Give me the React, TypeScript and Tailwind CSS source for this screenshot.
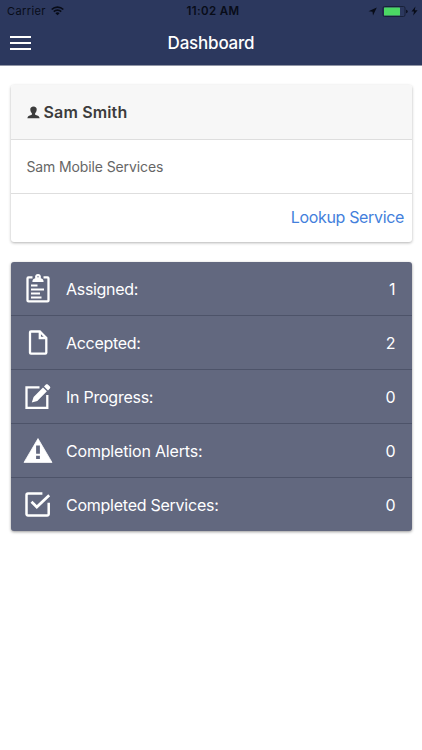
import React from "react";

type StatusRowType = {
  icon: React.ReactNode;
  label: string;
  labelStyle: string;
  count: number;
};

type IconProps = {
  children: React.ReactNode;
};

const RowIcon: React.FC<IconProps> = ({ children }) => (
  <svg
    viewBox="0 0 32 32"
    className="h-8 w-8 shrink-0"
    fill="none"
    stroke="white"
    strokeWidth="2.3"
  >
    {children}
  </svg>
);

const ClipboardIcon = () => (
  <RowIcon>
    <path d="M10.5 4.4H6.5a1 1 0 0 0-1 1v22a1 1 0 0 0 1 1h19a1 1 0 0 0 1-1v-22a1 1 0 0 0-1-1H21.5" />
    <path
      d="M10.4 9c0-2.3.8-3.2 2.8-3.8C12.6 2.6 14 1 16 1s3.4 1.6 2.8 4.2c2 .6 2.8 1.5 2.8 3.8z"
      fill="white"
      stroke="none"
    />
    <circle cx="16" cy="3.8" r="0.7" fill="#62687f" stroke="none" />
    <path d="M9 12.5h6.5M9 16.5h13M9 20.5h9M9 24.5h10.5" strokeWidth="2" />
  </RowIcon>
);

const DocumentIcon = () => (
  <RowIcon>
    <path d="M17.8 4.5H9a1 1 0 0 0-1 1v20.2a1 1 0 0 0 1 1h14.3a1 1 0 0 0 1-1V11z" />
    <path d="M17.8 4.5V11h6.5" />
  </RowIcon>
);

const EditIcon = () => (
  <RowIcon>
    <path d="M17.5 6.4h-13v20.5h20.8V14" />
    <path
      d="M9.8 21.5l1.8-5.6L21 6.4l3.9 3.9-9.6 9.6zM22 5.4l1.9-1.9c.5-.5 1.3-.5 1.9 0l2.1 2.1c.5.5.5 1.3 0 1.9L26 9.4z"
      fill="white"
      stroke="none"
    />
  </RowIcon>
);

const AlertIcon = () => (
  <RowIcon>
    <path
      d="M16 3.6L30 27.4H2z"
      fill="white"
      strokeWidth="0.8"
      strokeLinejoin="round"
    />
    <path d="M14.1 10.4h3.8v8.4h-3.8zM14.1 20.8h3.8v3.2h-3.8z" fill="#62687f" stroke="none" />
  </RowIcon>
);

const CheckIcon = () => (
  <RowIcon>
    <path
      d="M20.4 4.5H6a1.5 1.5 0 0 0-1.5 1.5v19A1.5 1.5 0 0 0 6 26.5h19.2a1.5 1.5 0 0 0 1.5-1.5V13.8"
      strokeWidth="2.5"
    />
    <path d="M9.5 12.7l5.3 5.3L27.2 6.2" strokeWidth="2.7" />
  </RowIcon>
);

const StatusRow: React.FC<StatusRowType> = ({ icon, label, labelStyle, count }) => {
  return (
    <li className="flex h-[54px] items-center border-b border-[#4d5369] pr-4 pl-[11.5px] text-white last:h-[53px] last:border-b-0">
      {icon}
      <span className={`ml-3 text-base leading-5 ${labelStyle}`}>{label}</span>
      <span className="ml-auto text-base leading-5">{count}</span>
    </li>
  );
};

const StatusBar = () => (
  <div className="grid h-[22px] grid-cols-3 items-center px-[7px] text-[11px] leading-4 text-[#080c18]">
    <div className="flex items-center gap-[5px]">
      <span className="tracking-[0.4px]">Carrier</span>
      <svg viewBox="0 0 13 10" className="h-[10px] w-[13px]" fill="none" stroke="currentColor">
        <path d="M.7 3.5a8.2 8.2 0 0 1 11.6 0M2.8 5.7a5.2 5.2 0 0 1 7.4 0" strokeWidth="1.7" />
        <path d="M6.5 9.3L4.4 7.2a3 3 0 0 1 4.2 0z" fill="currentColor" stroke="none" />
      </svg>
    </div>
    <span className="pl-1 text-center text-[11.5px] font-semibold tracking-[0.4px] whitespace-nowrap">
      11:02 AM
    </span>
    <div className="-mr-[3px] flex items-center justify-end">
      <svg viewBox="0 0 9 9" className="mr-[5px] h-[9px] w-[9px]" fill="currentColor">
        <path d="M8.8.4L5 8.6 4.5 4.8.5 4.3z" />
      </svg>
      <svg viewBox="0 0 27 11" className="h-[11px] w-[27px]">
        <rect x="1" y=".5" width="22" height="10" rx="1.5" fill="none" stroke="#182139" />
        <rect x="2" y="1.5" width="16" height="8" rx=".5" fill="#4bd964" />
        <path d="M24.2 3.8c2 .4 2 3 0 3.4z" fill="#080c18" />
      </svg>
      <svg viewBox="0 0 7 10" className="ml-[2px] h-[10px] w-[7px]" fill="currentColor">
        <path d="M4.4.5L.5 5.5H3L2.2 9.5 6.6 4.2H3.8z" />
      </svg>
    </div>
  </div>
);

const Header = () => (
  <header className="h-[66px] border-b border-[#9196a6] bg-[#2c385e]">
    <StatusBar />
    <div className="grid h-[42px] grid-cols-[48px_1fr_48px] items-center">
      <button className="ml-[10px] flex w-[21px] flex-col gap-1" aria-label="Menu">
        <span className="h-0.5 w-full bg-white" />
        <span className="h-0.5 w-full bg-white" />
        <span className="h-0.5 w-full bg-white" />
      </button>
      <h1 className="text-center text-[17px] leading-6 font-medium tracking-[-0.2px] text-white">
        Dashboard
      </h1>
    </div>
  </header>
);

const ProfileCard = () => (
  <section className="h-[157px] overflow-hidden rounded-[3px] bg-white shadow-[0_1px_3px_rgba(0,0,0,0.3)]">
    <div className="flex h-[55px] items-center gap-1 border-b border-[#dedede] bg-[#f7f7f7] px-4">
      <svg viewBox="0 0 13 13" className="h-[13px] w-[13px]" fill="#3c3c3c">
        <path d="M6.5.4C4.3.4 3.2 1.7 3.3 3.5c.1 1.7.8 2.8 1.5 3.7.4.7.2 1.4-.6 1.8C2.2 9.9.5 10 .4 12.2h12.2c-.1-2.2-1.8-2.3-3.8-3.2-.8-.4-1-1.1-.6-1.8.7-.9 1.4-2 1.5-3.7.1-1.8-1-3.1-3.2-3.1z" />
      </svg>
      <h2 className="text-base leading-5 font-semibold tracking-[0.15px] text-[#3c3c3c]">
        Sam Smith
      </h2>
    </div>
    <p className="flex h-[54px] items-center border-b border-[#dedede] px-4 text-sm tracking-[-0.12px] text-[#666]">
      Sam Mobile Services
    </p>
    <div className="flex h-[46px] items-center justify-end pr-[7.5px]">
      <a className="text-base leading-[25px] tracking-[-0.34px] text-[#437fdc]">Lookup Service</a>
    </div>
  </section>
);

const App: React.FC = () => {
  return (
    <div className="min-h-[750px] w-[422px] bg-white font-[Inter,sans-serif]">
      <Header />
      <main className="flex flex-col gap-5 px-[10.5px] pt-[19px]">
        <ProfileCard />
        <ul className="overflow-hidden rounded-[3px] bg-[#62687f] shadow-[0_1px_3px_rgba(0,0,0,0.4)]">
          <StatusRow icon={<ClipboardIcon />} label="Assigned:" labelStyle="tracking-[-0.3px]" count={1} />
          <StatusRow icon={<DocumentIcon />} label="Accepted:" labelStyle="tracking-[-0.3px]" count={2} />
          <StatusRow icon={<EditIcon />} label="In Progress:" labelStyle="tracking-[-0.25px]" count={0} />
          <StatusRow icon={<AlertIcon />} label="Completion Alerts:" labelStyle="tracking-[-0.18px]" count={0} />
          <StatusRow icon={<CheckIcon />} label="Completed Services:" labelStyle="tracking-[-0.25px]" count={0} />
        </ul>
      </main>
    </div>
  );
};

export default App;
